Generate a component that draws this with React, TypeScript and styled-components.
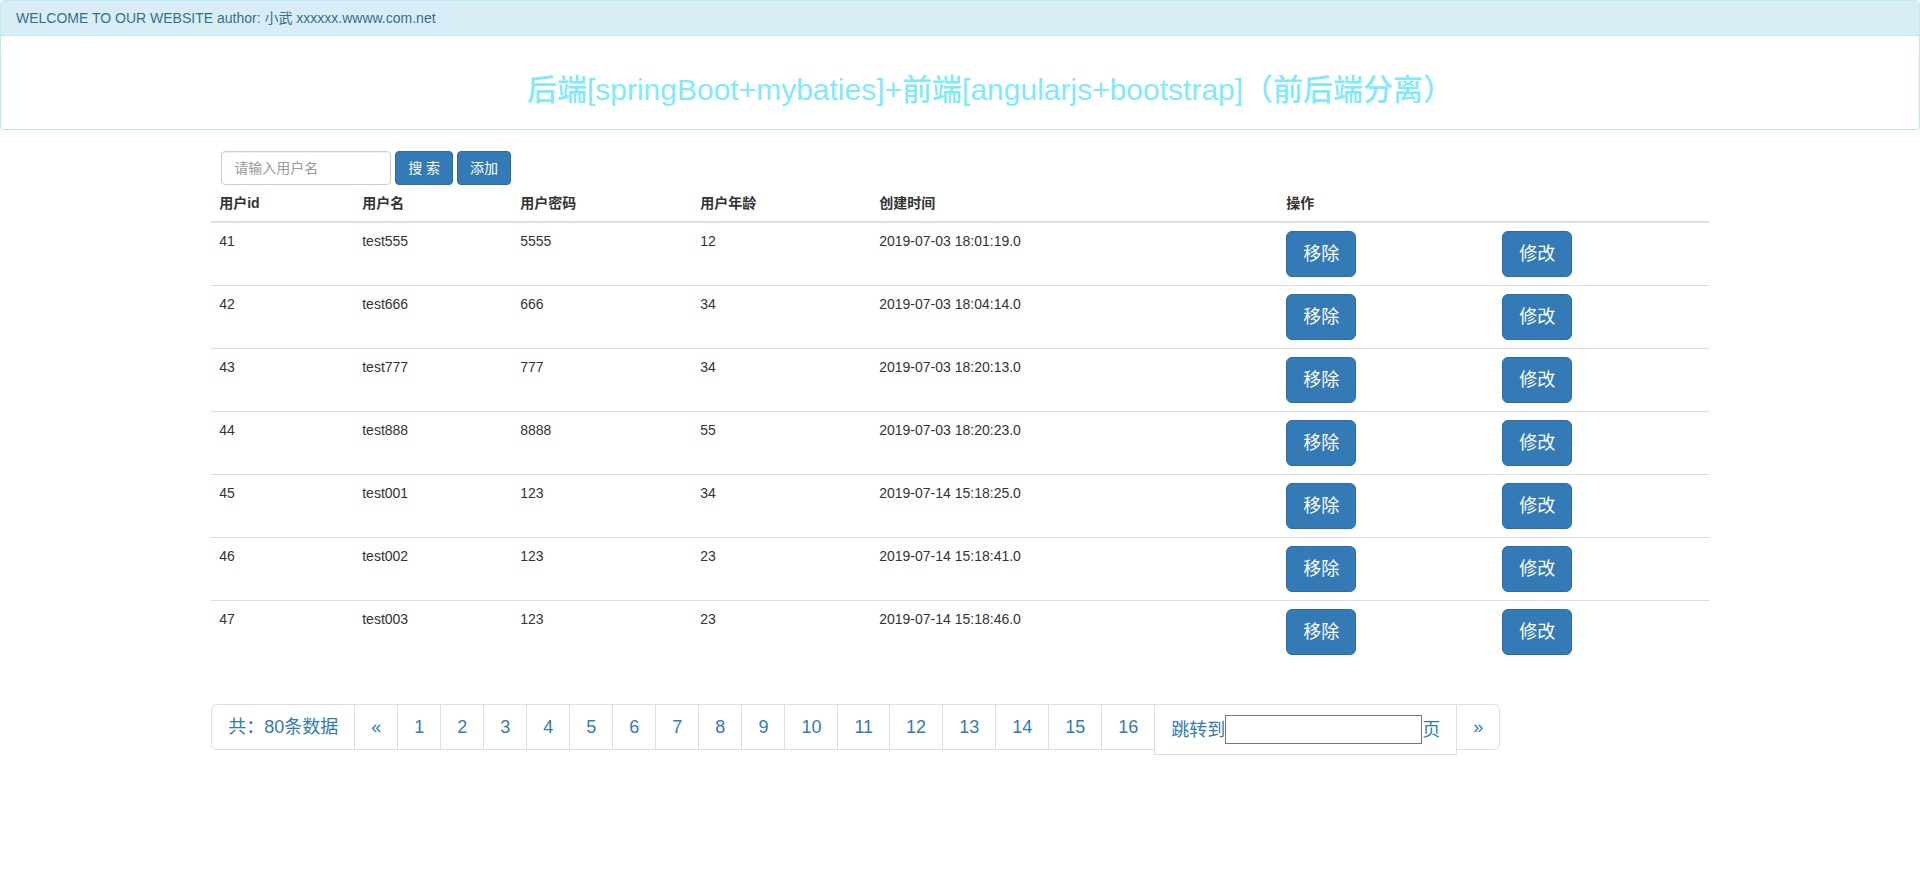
import React from "react";
import styled, { createGlobalStyle } from "styled-components";

const GlobalStyle = createGlobalStyle`
  html, body {
    margin: 0;
    padding: 0;
    background: #fff;
  }
  body {
    font-family: "Liberation Sans", Arial, "Noto Sans CJK SC", sans-serif;
    font-size: 14px;
    line-height: 1.42857143;
    color: #333;
  }
  * { box-sizing: border-box; }
`;

const Panel = styled.div`
  border: 1px solid #bce8f1;
  border-radius: 4px;
  margin-bottom: 21px;
  background: #fff;
`;

const PanelHeading = styled.div`
  background: #d9edf7;
  color: #31708f;
  border-bottom: 1px solid #bce8f1;
  border-radius: 3px 3px 0 0;
  padding: 7px 15px 7px;
  line-height: 20px;
`;

const PanelBody = styled.div`
  padding: 15px;
  text-align: center;
`;

const Title = styled.h2`
  margin: 22px 0 8px;
  padding-left: 60px;
  font-size: 30px;
  font-weight: 500;
  line-height: 1.1;
  color: #80e9fc;
`;

const Main = styled.div`
  width: 78%;
  margin: 0 auto;
`;

const Toolbar = styled.div`
  display: flex;
  gap: 4px;
  padding-left: 10px;
`;

const SearchInput = styled.input`
  width: 170px;
  height: 34px;
  padding: 6px 12px;
  font-family: inherit;
  font-size: 14px;
  color: #555;
  border: 1px solid #ccc;
  border-radius: 4px;
  box-shadow: inset 0 1px 1px rgba(0, 0, 0, 0.075);
  outline: none;
  &::placeholder { color: #999; }
`;

const Btn = styled.button<{ $lg?: boolean }>`
  font-family: inherit;
  color: #fff;
  background: #337ab7;
  border: 1px solid #2e6da4;
  cursor: pointer;
  white-space: pre;
  font-size: ${(p) => (p.$lg ? "18px" : "14px")};
  line-height: ${(p) => (p.$lg ? "24px" : "20px")};
  padding: ${(p) => (p.$lg ? "10px 16px" : "6px 12px")};
  border-radius: ${(p) => (p.$lg ? "6px" : "4px")};
`;

const Table = styled.table`
  width: 100%;
  border-collapse: collapse;
  border-spacing: 0;
  table-layout: fixed;
  margin-bottom: 20px;
`;

const Th = styled.th`
  text-align: left;
  font-weight: bold;
  padding: 8px;
  line-height: 20px;
  vertical-align: bottom;
  border-bottom: 2px solid #ddd;
`;

const Td = styled.td`
  padding: 8px;
  line-height: 20px;
  vertical-align: top;
  border-top: 1px solid #ddd;
`;

const Pager = styled.ul`
  display: inline-flex;
  align-items: flex-start;
  list-style: none;
  margin: 21px 0 20px;
  padding: 0 0 0 1px;
`;

const PageItem = styled.li<{ $first?: boolean; $last?: boolean }>`
  display: block;
  margin-left: -1px;
  padding: 10px 16px;
  font-size: 18px;
  line-height: 24px;
  color: #337ab7;
  background: #fff;
  border: 1px solid #ddd;
  cursor: pointer;
  border-radius: ${(p) =>
    p.$first ? "6px 0 0 6px" : p.$last ? "0 6px 6px 0" : "0"};
`;

const JumpItem = styled.li`
  display: flex;
  align-items: center;
  margin-left: -1px;
  padding: 10px 16px;
  font-size: 18px;
  line-height: 24px;
  color: #337ab7;
  background: #fff;
  border: 1px solid #ddd;
`;

const JumpInput = styled.input`
  width: 197px;
  height: 29px;
  border: 1px solid #767676;
  padding: 1px 2px;
  font-size: 13px;
  outline: none;
`;

const widths = [143, 158, 180, 179, 407, 216, 215];

const rows = [
  ["41", "test555", "5555", "12", "2019-07-03 18:01:19.0"],
  ["42", "test666", "666", "34", "2019-07-03 18:04:14.0"],
  ["43", "test777", "777", "34", "2019-07-03 18:20:13.0"],
  ["44", "test888", "8888", "55", "2019-07-03 18:20:23.0"],
  ["45", "test001", "123", "34", "2019-07-14 15:18:25.0"],
  ["46", "test002", "123", "23", "2019-07-14 15:18:41.0"],
  ["47", "test003", "123", "23", "2019-07-14 15:18:46.0"],
];

const headers = ["用户id", "用户名", "用户密码", "用户年龄", "创建时间", "操作", ""];

export default function App() {
  const pages = Array.from({ length: 16 }, (_, i) => i + 1);
  return (
    <>
      <GlobalStyle />
      <Panel>
        <PanelHeading>WELCOME TO OUR WEBSITE author: 小武 xxxxxx.wwww.com.net</PanelHeading>
        <PanelBody>
          <Title>后端[springBoot+mybaties]+前端[angularjs+bootstrap]（前后端分离）</Title>
        </PanelBody>
      </Panel>
      <Main>
        <Toolbar>
          <SearchInput placeholder="请输入用户名" />
          <Btn>搜 索</Btn>
          <Btn>添加</Btn>
        </Toolbar>
        <Table>
          <colgroup>
            {widths.map((w, i) => (
              <col key={i} style={{ width: w }} />
            ))}
          </colgroup>
          <thead>
            <tr>
              {headers.map((h, i) => (
                <Th key={i}>{h}</Th>
              ))}
            </tr>
          </thead>
          <tbody>
            {rows.map((r) => (
              <tr key={r[0]}>
                {r.map((c, i) => (
                  <Td key={i}>{c}</Td>
                ))}
                <Td>
                  <Btn $lg>移除</Btn>
                </Td>
                <Td>
                  <Btn $lg>修改</Btn>
                </Td>
              </tr>
            ))}
          </tbody>
        </Table>
        <Pager>
          <PageItem $first>共：80条数据</PageItem>
          <PageItem>«</PageItem>
          {pages.map((p) => (
            <PageItem key={p}>{p}</PageItem>
          ))}
          <JumpItem>
            跳转到<JumpInput />页
          </JumpItem>
          <PageItem $last>»</PageItem>
        </Pager>
      </Main>
    </>
  );
}
